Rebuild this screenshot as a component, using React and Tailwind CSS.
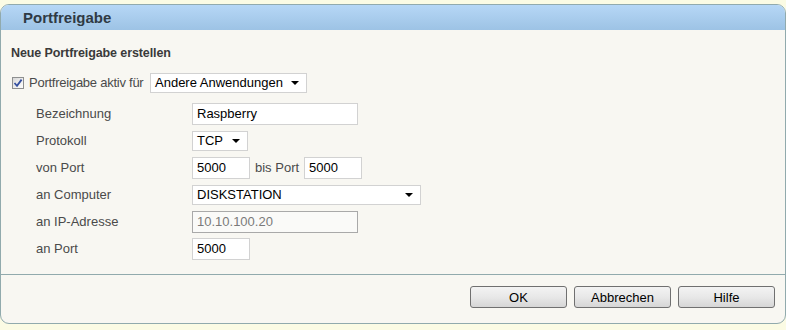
import React from "react";

const font = { fontFamily: '"Liberation Sans", Arial, sans-serif' };

function Arrow() {
  return (
    <span className="w-0 h-0 border-x-[4px] border-x-transparent border-t-[4px] border-t-black" />
  );
}

function Row({ label, children }) {
  return (
    <div className="flex items-center h-[27px] pl-[25px]">
      <div className="w-[156px] text-[13px] text-[#4a4a4a] leading-none">{label}</div>
      <div className="flex items-center">{children}</div>
    </div>
  );
}

function Field({ w, children, muted }) {
  return (
    <div
      className={
        "h-[22px] flex items-center pl-[4px] text-[13px] leading-none " +
        (muted
          ? "border border-[#a9a9a9] bg-[#fafaf8] text-[#7a7a7a]"
          : "border border-[#d2d2d2] bg-white text-black")
      }
      style={{ width: w }}
    >
      {children}
    </div>
  );
}

function Select({ w, children }) {
  return (
    <div
      className="h-[20px] flex items-center justify-between pl-[4px] pr-[7px] border border-[#d2d2d2] bg-white text-[13px] text-black leading-none"
      style={{ width: w }}
    >
      <span>{children}</span>
      <Arrow />
    </div>
  );
}

function Button({ children }) {
  return (
    <div className="w-[97px] h-[22px] flex items-center justify-center rounded-[3px] border border-[#707070] bg-gradient-to-b from-[#f3f3f3] via-[#e8e8e8] to-[#d6d6d6] text-[13px] text-black leading-none">
      {children}
    </div>
  );
}

export default function App() {
  return (
    <div className="w-[786px] h-[330px] bg-[#fbfbe4] pt-[4px]" style={font}>
      <div className="h-[320px] flex flex-col border border-[#91aaad] rounded-[9px] overflow-hidden bg-[#f8f7f2]">
        <div className="h-[25px] shrink-0 flex items-center pl-[22px] bg-gradient-to-b from-[#b6d7f6] to-[#9dc3e5]">
          <span className="text-[15px] font-bold text-[#2f3a44] leading-none">Portfreigabe</span>
        </div>
        <div className="flex-1 pt-[15px] px-[10px]">
          <div className="h-[16px] flex items-center text-[12.5px] font-bold text-[#3a3a3a] tracking-[-0.1px]">
            Neue Portfreigabe erstellen
          </div>
          <div className="mt-[8px] h-[27px] flex items-center">
            <div className="ml-[1px] w-[12px] h-[12px] border border-[#8e8f8f] bg-gradient-to-br from-[#d8d8d8] to-[#ffffff] flex items-center justify-center">
              <svg width="10" height="10" viewBox="0 0 10 10">
                <path d="M1.5 5 L4 7.8 L8.6 1.6" fill="none" stroke="#3550a0" strokeWidth="1.8" />
              </svg>
            </div>
            <span className="ml-[5px] w-[116px] text-[13px] text-[#4a4a4a] leading-none tracking-[-0.25px] whitespace-nowrap">
              Portfreigabe aktiv für
            </span>
            <div className="ml-[5px]">
              <Select w={157}>Andere Anwendungen</Select>
            </div>
          </div>
          <div className="mt-[4px]">
            <Row label="Bezeichnung">
              <Field w={166}>Raspberry</Field>
            </Row>
            <Row label="Protokoll">
              <Select w={56}>TCP</Select>
            </Row>
            <Row label="von Port">
              <Field w={58}>5000</Field>
              <span className="ml-[5px] mr-[5px] text-[13px] text-[#4a4a4a] leading-none">bis Port</span>
              <Field w={58}>5000</Field>
            </Row>
            <Row label="an Computer">
              <Select w={229}>DISKSTATION</Select>
            </Row>
            <Row label="an IP-Adresse">
              <Field w={166} muted>10.10.100.20</Field>
            </Row>
            <Row label="an Port">
              <Field w={58}>5000</Field>
            </Row>
          </div>
        </div>
        <div className="h-[49px] shrink-0 border-t border-[#91aaad] flex justify-end gap-[7px] pt-[11px] pr-[10px]">
          <Button>OK</Button>
          <Button>Abbrechen</Button>
          <Button>Hilfe</Button>
        </div>
      </div>
    </div>
  );
}
